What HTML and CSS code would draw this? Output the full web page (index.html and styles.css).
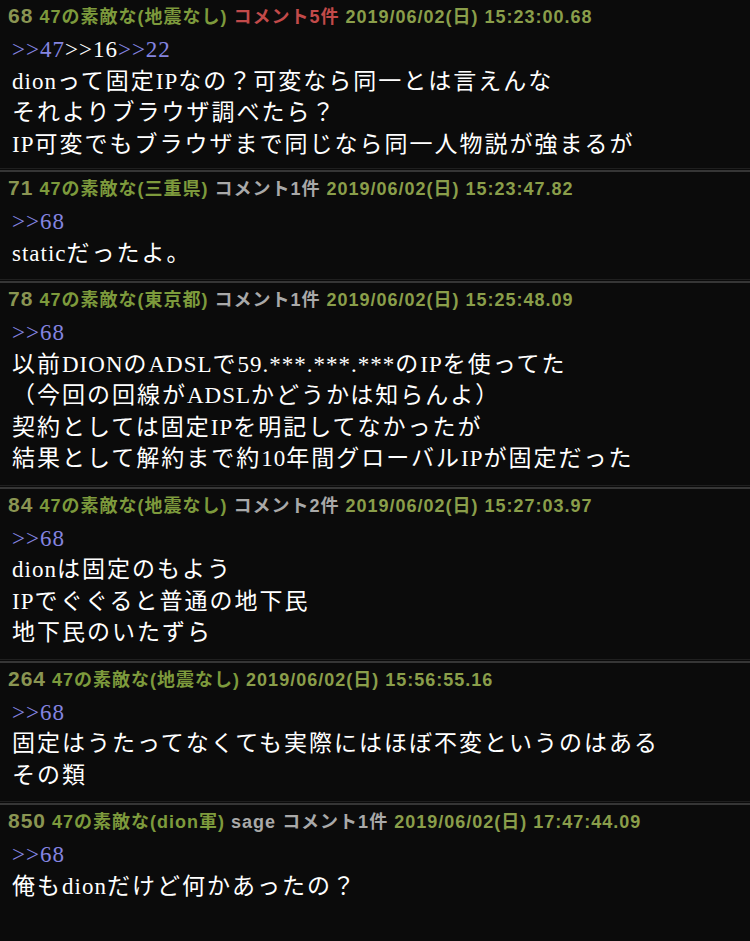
FILE: index.html
```html
<!DOCTYPE html>
<html lang="ja">
<head>
<meta charset="utf-8">
<link rel="stylesheet" href="styles.css">
</head>
<body>
<div class="thread">
  <div class="post first">
    <div class="head"><span class="num">68</span> <span class="name">47の素敵な(地震なし)</span> <span class="cmt hot">コメント5件</span> <span class="date">2019/06/02(日) 15:23:00.68</span></div>
    <div class="body">
      <div class="line"><span class="lat"><span class="anc">&gt;&gt;47</span>&gt;&gt;16<span class="anc">&gt;&gt;22</span></span></div>
      <div class="line"><span class="lat">dion</span>って固定<span class="lat">IP</span>なの？可変なら同一とは言えんな</div>
      <div class="line">それよりブラウザ調べたら？</div>
      <div class="line"><span class="lat">IP</span>可変でもブラウザまで同じなら同一人物説が強まるが</div>
    </div>
  </div>
  <div class="post">
    <div class="head"><span class="num">71</span> <span class="name">47の素敵な(三重県)</span> <span class="cmt">コメント1件</span> <span class="date">2019/06/02(日) 15:23:47.82</span></div>
    <div class="body">
      <div class="line"><span class="lat anc">&gt;&gt;68</span></div>
      <div class="line"><span class="lat">static</span>だったよ。</div>
    </div>
  </div>
  <div class="post">
    <div class="head"><span class="num">78</span> <span class="name">47の素敵な(東京都)</span> <span class="cmt">コメント1件</span> <span class="date">2019/06/02(日) 15:25:48.09</span></div>
    <div class="body">
      <div class="line"><span class="lat anc">&gt;&gt;68</span></div>
      <div class="line">以前<span class="lat">DION</span>の<span class="lat">ADSL</span>で<span class="lat">59.***.***.***</span>の<span class="lat">IP</span>を使ってた</div>
      <div class="line">（今回の回線が<span class="lat">ADSL</span>かどうかは知らんよ）</div>
      <div class="line">契約としては固定<span class="lat">IP</span>を明記してなかったが</div>
      <div class="line">結果として解約まで約<span class="lat">10</span>年間グローバル<span class="lat">IP</span>が固定だった</div>
    </div>
  </div>
  <div class="post">
    <div class="head"><span class="num">84</span> <span class="name">47の素敵な(地震なし)</span> <span class="cmt">コメント2件</span> <span class="date">2019/06/02(日) 15:27:03.97</span></div>
    <div class="body">
      <div class="line"><span class="lat anc">&gt;&gt;68</span></div>
      <div class="line"><span class="lat">dion</span>は固定のもよう</div>
      <div class="line"><span class="lat">IP</span>でぐぐると普通の地下民</div>
      <div class="line">地下民のいたずら</div>
    </div>
  </div>
  <div class="post">
    <div class="head"><span class="num">264</span> <span class="name">47の素敵な(地震なし)</span> <span class="date">2019/06/02(日) 15:56:55.16</span></div>
    <div class="body">
      <div class="line"><span class="lat anc">&gt;&gt;68</span></div>
      <div class="line">固定はうたってなくても実際にはほぼ不変というのはある</div>
      <div class="line">その類</div>
    </div>
  </div>
  <div class="post">
    <div class="head"><span class="num">850</span> <span class="name">47の素敵な(dion軍)</span> <span class="sage">sage</span> <span class="cmt">コメント1件</span> <span class="date">2019/06/02(日) 17:47:44.09</span></div>
    <div class="body">
      <div class="line"><span class="lat anc">&gt;&gt;68</span></div>
      <div class="line">俺も<span class="lat">dion</span>だけど何かあったの？</div>
    </div>
  </div>
</div>
</body>
</html>
```
FILE: styles.css
```css
html, body {
  margin: 0;
  padding: 0;
  background: #0b0b0b;
}
body {
  width: 750px;
  height: 941px;
  overflow: hidden;
}
.thread {
  display: flex;
  flex-direction: column;
}
.post {
  border-top: 1px solid #1f1f1f;
  padding: 0 0 10px 0;
}
.post::before {
  content: "";
  display: block;
  margin-top: 1px;
  border-top: 2px solid #363636;
}
.post.first {
  border-top: none;
  padding-top: 0;
  padding-bottom: 8px;
}
.post.first::before {
  display: none;
}
.head {
  padding: 2px 0 0 8px;
  height: 28px;
  line-height: 28px;
  font-family: "Liberation Sans", "Noto Sans CJK JP", sans-serif;
  font-weight: bold;
  font-size: 18px;
  letter-spacing: 1px;
  color: #7f9a3e;
  white-space: nowrap;
}
.num {
  font-size: 21px;
  letter-spacing: 1px;
  color: #8a9552;
}
.name {
  color: #7d9a3c;
}
.cmt {
  color: #a9a9a9;
}
.cmt.hot {
  color: #c24a4a;
}
.sage {
  color: #a9a9a9;
}
.date {
  color: #8a9e4a;
}
.body {
  margin-top: 4px;
  padding-left: 12px;
  font-family: "Liberation Serif", "Noto Sans CJK JP", serif;
  font-size: 23px;
  letter-spacing: 2px;
  line-height: 31.5px;
  color: #ffffff;
}
.lat {
  font-family: "Liberation Serif", serif;
  letter-spacing: 1px;
}
.line {
  white-space: nowrap;
}
.anc {
  color: #8585e0;
}
```
